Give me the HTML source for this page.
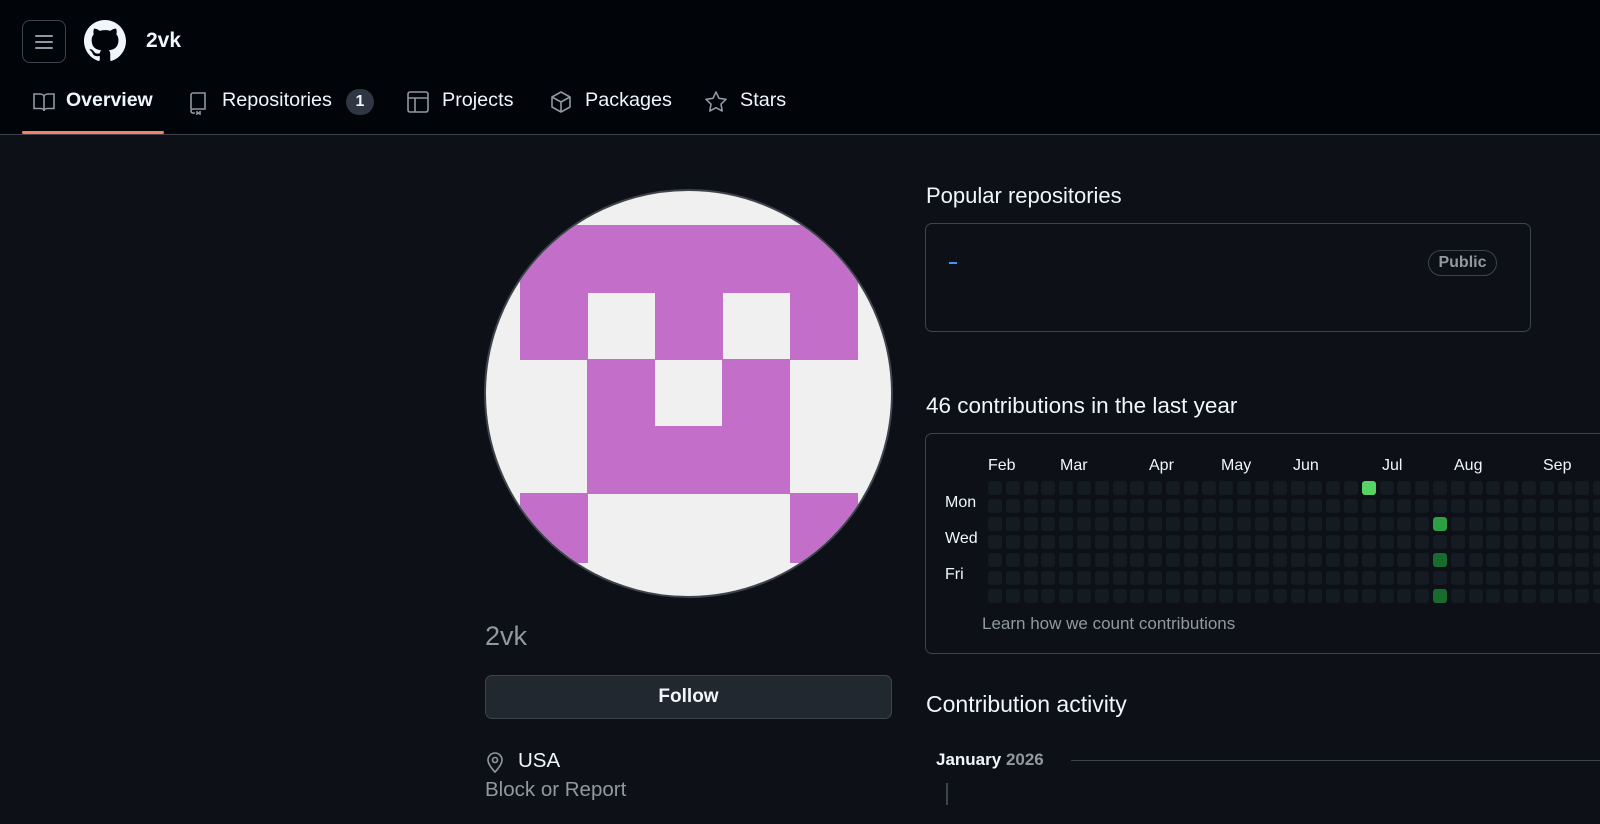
<!DOCTYPE html>
<html><head><meta charset="utf-8"><style>
*{margin:0;padding:0;box-sizing:border-box}
body{width:1600px;height:824px;overflow:hidden;background:#0d1117;font-family:"Liberation Sans",sans-serif;color:#f0f6fc;position:relative}
.a{position:absolute;white-space:nowrap}
#hdr{left:0;top:0;width:1600px;height:135px;background:#010409;border-bottom:1px solid #3d444d}
.tab{position:absolute;top:89px;font-size:19.8px;color:#f0f6fc;white-space:nowrap}
.cell{position:absolute;width:14px;height:14px;border-radius:3px;background:#151b23}
.m{position:absolute;top:457px;font-size:16px}
.d{position:absolute;left:945px;font-size:16px}
</style></head><body>
<div id="hdr" class="a"></div>
<div class="a" style="left:22px;top:20px;width:44px;height:43px;border:1px solid #3d444d;border-radius:8px"></div>
<svg class="a" style="left:33px;top:31px" width="22" height="22" viewBox="0 0 22 22"><path d="M3 5h16M3 11h16M3 17h16" stroke="#9198a1" stroke-width="2" stroke-linecap="round"/></svg>
<svg class="a" style="left:84px;top:20px" width="42" height="42" viewBox="0 0 16 16"><path fill="#f0f6fc" d="M8 0C3.58 0 0 3.58 0 8c0 3.54 2.290 6.53 5.47 7.59.4.07.55-.17.55-.38 0-.19-.01-.82-.01-1.49-2.01.37-2.53-.49-2.69-.94-.09-.23-.48-.94-.82-1.130-.28-.15-.68-.52-.01-.53.63-.01 1.08.58 1.23.82.72 1.21 1.87.87 2.33.66.07-.52.28-.87.51-1.07-1.78-.2-3.64-.89-3.64-3.95 0-.87.31-1.59.82-2.15-.08-.2-.36-1.02.08-2.12 0 0 .67-.21 2.2.82.64-.18 1.32-.27 2-.27.68 0 1.36.09 2 .27 1.53-1.04 2.2-.82 2.2-.82.44 1.1.16 1.92.08 2.12.51.56.82 1.27.82 2.15 0 3.07-1.87 3.75-3.65 3.95.29.25.54.73.54 1.48 0 1.07-.01 1.930-.01 2.2 0 .21.15.46.55.38A8.013 8.013 0 0016 8c0-4.42-3.58-8-8-8z"/></svg>
<div class="a" style="left:146px;top:29px;font-size:21px;font-weight:bold">2vk</div>
<svg class="a" style="left:32px;top:91px" width="24" height="22" viewBox="0 0 24 22" fill="none" stroke="#9198a1" stroke-width="1.6"><path d="M2 3h6c2 0 4 1 4 3v14c0-1.5-1.5-2.5-3.5-2.5H2z M22 3h-6c-2 0-4 1-4 3v14c0-1.5 1.5-2.5 3.5-2.5H22z"/></svg>
<div class="tab" style="left:66px;font-weight:bold;font-size:19.5px">Overview</div>
<div class="a" style="left:22px;top:131px;width:142px;height:3px;background:#f78166;border-radius:2px"></div>
<svg class="a" style="left:188px;top:91px" width="20" height="24" viewBox="0 0 20 24" fill="none" stroke="#9198a1" stroke-width="1.6"><path d="M3 18V4a2 2 0 012-2h12v16H5a2 2 0 00-2 2 2 2 0 002 2h2 M9 20v3l1.5-1 1.5 1v-3"/></svg>
<div class="tab" style="left:222px">Repositories</div>
<div class="a" style="left:346px;top:89px;width:28px;height:26px;border-radius:13px;background:#2f3742;font-size:16px;font-weight:bold;text-align:center;line-height:26px">1</div>
<svg class="a" style="left:406px;top:90px" width="24" height="24" viewBox="0 0 24 24" fill="none" stroke="#9198a1" stroke-width="1.6"><rect x="2" y="2" width="20" height="20" rx="2"/><path d="M2 8h20M9 8v14"/></svg>
<div class="tab" style="left:442px">Projects</div>
<svg class="a" style="left:550px;top:90px" width="22" height="24" viewBox="0 0 22 24" fill="none" stroke="#9198a1" stroke-width="1.6" stroke-linejoin="round"><path d="M11 2l9 5v10l-9 5-9-5V7z M2 7l9 5 9-5 M11 12v10"/></svg>
<div class="tab" style="left:585px">Packages</div>
<svg class="a" style="left:704px;top:90px" width="24" height="24" viewBox="0 0 24 24" fill="none" stroke="#9198a1" stroke-width="1.6" stroke-linejoin="round"><path d="M12 2l3 6.3 7 1-5 4.8 1.2 6.9L12 17.7 5.8 21l1.2-6.9-5-4.8 7-1z"/></svg>
<div class="tab" style="left:740px">Stars</div>

<div class="a" style="left:484px;top:189px;width:409px;height:409px;border-radius:50%;background:#f0f0f0;border:2px solid #3d444d;overflow:hidden">
<svg width="405" height="405" viewBox="0 0 405 405" style="position:absolute;left:0;top:0"><g fill="#c36fc9" transform="translate(34,34)">
<rect x="0" y="0" width="338" height="68"/>
<rect x="0" y="67" width="68" height="68"/><rect x="135" y="67" width="68" height="68"/><rect x="270" y="67" width="68" height="68"/>
<rect x="67" y="134" width="68" height="68"/><rect x="202" y="134" width="68" height="68"/>
<rect x="67" y="201" width="203" height="68"/>
<rect x="0" y="268" width="68" height="70"/><rect x="270" y="268" width="68" height="70"/>
</g></svg></div>
<div class="a" style="left:485px;top:621px;font-size:27px;color:#9198a1">2vk</div>
<div class="a" style="left:485px;top:675px;width:407px;height:44px;border:1px solid #3d444d;border-radius:7px;background:#212830;text-align:center;line-height:42px;font-size:19px;font-weight:bold">Follow</div>
<svg class="a" style="left:485px;top:750px" width="20" height="24" viewBox="0 0 20 24" fill="none" stroke="#9198a1" stroke-width="1.6"><path d="M10 22s-7-7-7-12a7 7 0 0114 0c0 5-7 12-7 12z"/><circle cx="10" cy="10" r="2.5"/></svg>
<div class="a" style="left:518px;top:749px;font-size:20.5px">USA</div>
<div class="a" style="left:485px;top:778px;font-size:20.5px;color:#9198a1">Block or Report</div>

<div class="a" style="left:926px;top:183px;font-size:22px">Popular repositories</div>
<div class="a" style="left:925px;top:223px;width:606px;height:109px;border:1px solid #3d444d;border-radius:7px"></div>
<div class="a" style="left:949px;top:262px;width:8px;height:2px;background:#4493f8"></div>
<div class="a" style="left:1428px;top:250px;width:69px;height:26px;border:1px solid #3d444d;border-radius:13px;color:#9198a1;font-size:16px;font-weight:bold;text-align:center;line-height:24px">Public</div>
<div class="a" style="left:926px;top:393px;font-size:22.5px">46 contributions in the last year</div>
<div class="a" style="left:925px;top:433px;width:700px;height:221px;border:1px solid #3d444d;border-radius:7px"></div>
<div class="m" style="left:988px">Feb</div>
<div class="m" style="left:1060px">Mar</div>
<div class="m" style="left:1149px">Apr</div>
<div class="m" style="left:1221px">May</div>
<div class="m" style="left:1293px">Jun</div>
<div class="m" style="left:1382px">Jul</div>
<div class="m" style="left:1454px">Aug</div>
<div class="m" style="left:1543px">Sep</div>
<div class="d" style="top:494px">Mon</div>
<div class="d" style="top:530px">Wed</div>
<div class="d" style="top:566px">Fri</div>
<div id="grid"></div>
<div class="a" style="left:982px;top:614px;font-size:17px;color:#9198a1">Learn how we count contributions</div>
<div class="a" style="left:926px;top:691px;font-size:23px">Contribution activity</div>
<div class="a" style="left:936px;top:750px;font-size:17px;font-weight:bold">January <span style="color:#9198a1">2026</span></div>
<div class="a" style="left:1071px;top:760px;width:529px;height:1px;background:#3d444d"></div>
<div class="a" style="left:946px;top:783px;width:2px;height:22px;background:#3d444d"></div>
<script>
var g=document.getElementById('grid'),h='';
for(var c=0;c<35;c++)for(var r=0;r<7;r++){
var col='#151b23';
if(c==21&&r==0)col='#56d364';
if(c==25&&r==2)col='#2ea043';
if(c==25&&(r==4||r==6))col='#196c2e';
h+='<div class="cell" style="left:'+(988+c*17.8).toFixed(1)+'px;top:'+(481+r*18)+'px;background:'+col+'"></div>';}
g.innerHTML=h;
</script>
</body></html>
